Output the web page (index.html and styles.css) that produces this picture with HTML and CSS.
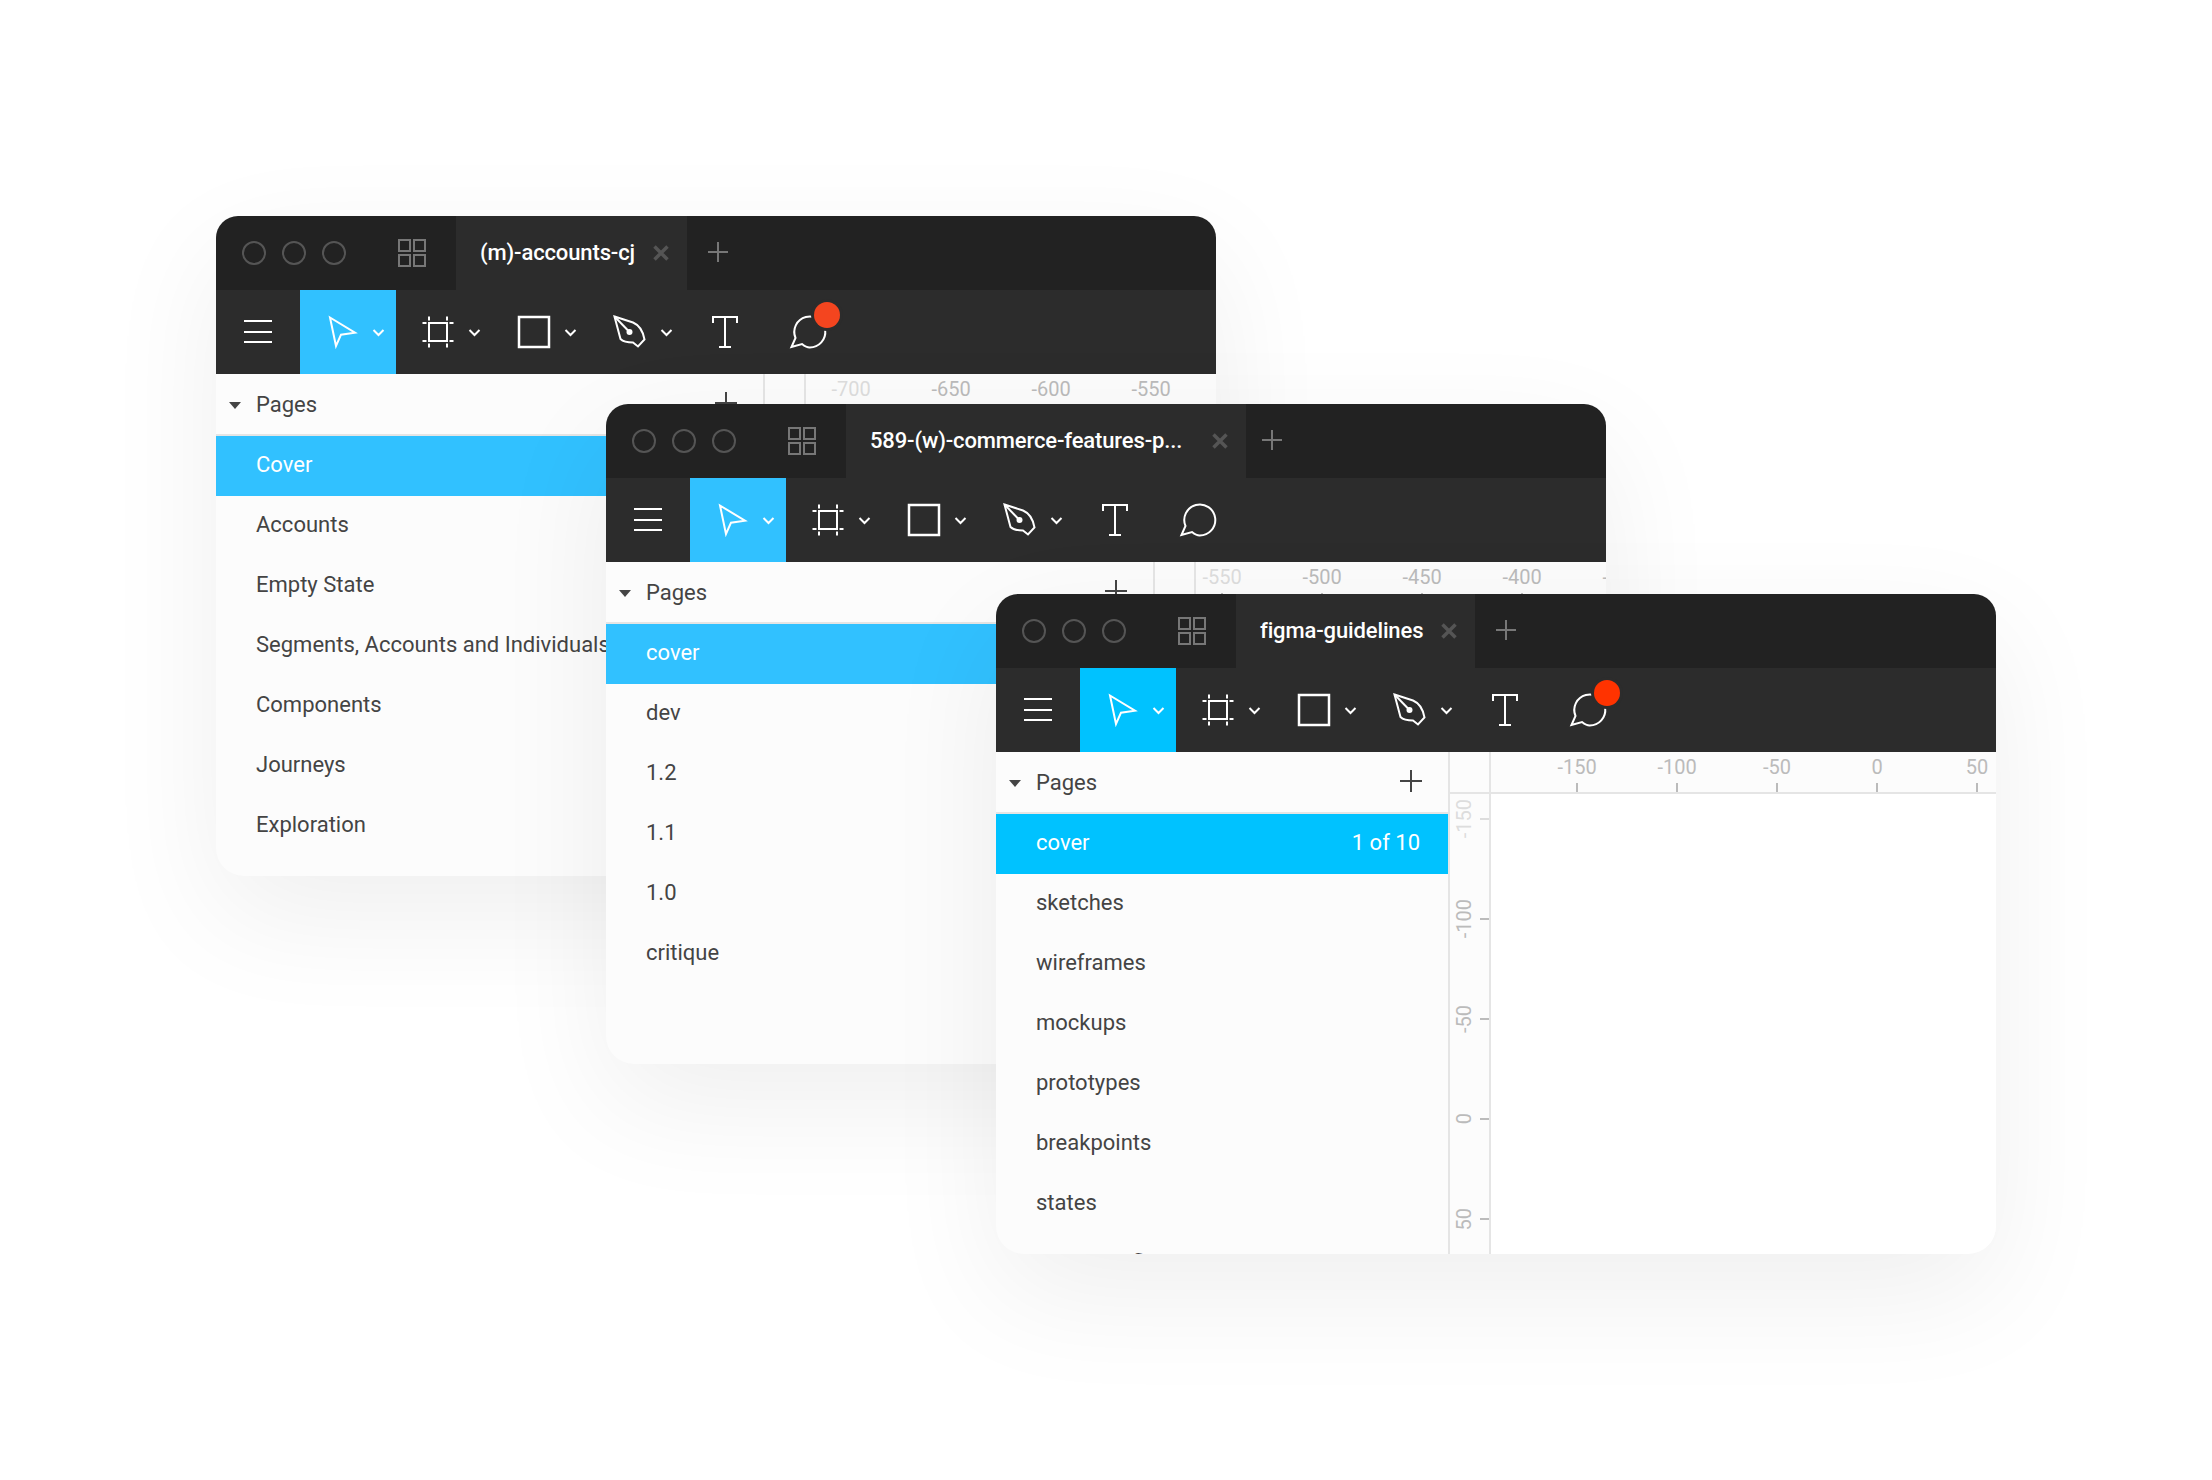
FILE: index.html

```html
<!DOCTYPE html>
<html lang="en">
<head>
  <meta charset="UTF-8" />
  <title>Figma windows</title>
  <link rel="stylesheet" href="styles.css">
</head>
<body>
  <!-- toolbar icons, each drawn in its own 96x84 tool box -->
  <svg class="defs" aria-hidden="true">
    <symbol id="move" viewBox="0 0 96 84"><path class="ln" d="M30 27.5L55 42.7 41 44.7 36 56Z"/><path class="ln" d="M73.5 40l5 5 5-5"/></symbol>
    <symbol id="frame" viewBox="0 0 96 84">
      <rect class="ln" x="33" y="33" width="18" height="18"/>
      <path class="ln" d="M26.5 33h4M53.5 33h4M26.5 51h4M53.5 51h4M33 26.5v4M51 26.5v4M33 53.5v4M51 53.5v4"/>
      <path class="ln" d="M73.5 40l5 5 5-5"/>
    </symbol>
    <symbol id="rect" viewBox="0 0 96 84"><rect class="ln ln-thick" x="27" y="27" width="30" height="30"/><path class="ln" d="M73.5 40l5 5 5-5"/></symbol>
    <symbol id="pen" viewBox="0 0 96 84">
      <path class="ln" d="M26.5 26.5L45 32.5C51 35 55 41 56.5 49.5L50 56.5 45 52.5C40 52.5 35 51.5 32.5 49Z"/>
      <path class="ln" d="M26.5 26.5L41.5 42"/>
      <circle class="dot" cx="41.5" cy="42" r="3"/>
      <path class="ln" d="M73.5 40l5 5 5-5"/>
    </symbol>
    <symbol id="text" viewBox="0 0 96 84"><path class="ln" d="M29 33v-6h24v6M41 27v30M35 57h12"/></symbol>
    <symbol id="comment" viewBox="0 0 96 84"><path class="ln" d="M11.5 57L15.5 48A15.5 15.5 0 1 1 29.5 57.5C27 57.5 24.5 56 22 54Z"/></symbol>
    <symbol id="grid" viewBox="0 0 28 28"><path class="ln-grey" d="M1 1h11v11H1zM16 1h11v11H16zM1 16h11v11H1zM16 16h11v11H16z"/></symbol>
    <symbol id="close" viewBox="0 0 16 16"><path class="ln-close" d="M1.5 1.5l13 13M14.5 1.5l-13 13"/></symbol>
  </svg>

  <section class="win win-back win-1">
    <div class="titlebar">
      <div class="lights"><i></i><i></i><i></i></div>
      <svg class="grid"><use href="#grid"/></svg>
      <div class="tab"><span class="tab-name">(m)-accounts-cj</span><svg class="tab-x"><use href="#close"/></svg></div>
      <div class="tab-plus"></div>
    </div>
    <div class="toolbar">
      <div class="menu"><i></i><i></i><i></i></div>
      <svg class="tool tool-on"><use href="#move"/></svg>
      <svg class="tool"><use href="#frame"/></svg>
      <svg class="tool"><use href="#rect"/></svg>
      <svg class="tool"><use href="#pen"/></svg>
      <svg class="tool"><use href="#text"/></svg>
      <div class="tool-wrap"><svg class="tool"><use href="#comment"/></svg><span class="badge"></span></div>
    </div>
    <div class="body">
      <aside class="sidebar sidebar-wide">
        <div class="pages-head"><span class="caret"></span><span>Pages</span><span class="add"></span></div>
        <ul class="pages">
          <li class="on">Cover</li>
          <li>Accounts</li>
          <li>Empty State</li>
          <li>Segments, Accounts and Individuals</li>
          <li>Components</li>
          <li>Journeys</li>
          <li>Exploration</li>
        </ul>
      </aside>
      <div class="canvas">
        <div class="ruler-x">
          <div class="corner"></div>
          <div class="marks">
            <span class="mark mark-faint">-700</span><span class="mark">-650</span><span class="mark">-600</span><span class="mark">-550</span>
          </div>
        </div>
      </div>
    </div>
  </section>

  <section class="win win-back win-2">
    <div class="titlebar">
      <div class="lights"><i></i><i></i><i></i></div>
      <svg class="grid"><use href="#grid"/></svg>
      <div class="tab tab-long"><span class="tab-name">589-(w)-commerce-features-p...</span><svg class="tab-x"><use href="#close"/></svg></div>
      <div class="tab-plus"></div>
    </div>
    <div class="toolbar">
      <div class="menu"><i></i><i></i><i></i></div>
      <svg class="tool tool-on"><use href="#move"/></svg>
      <svg class="tool"><use href="#frame"/></svg>
      <svg class="tool"><use href="#rect"/></svg>
      <svg class="tool"><use href="#pen"/></svg>
      <svg class="tool"><use href="#text"/></svg>
      <svg class="tool"><use href="#comment"/></svg>
    </div>
    <div class="body">
      <aside class="sidebar sidebar-wide">
        <div class="pages-head"><span class="caret"></span><span>Pages</span><span class="add"></span></div>
        <ul class="pages">
          <li class="on">cover</li>
          <li>dev</li>
          <li>1.2</li>
          <li>1.1</li>
          <li>1.0</li>
          <li>critique</li>
        </ul>
      </aside>
      <div class="canvas">
        <div class="ruler-x">
          <div class="corner"></div>
          <div class="marks">
            <span class="mark mark-faint">-550</span><span class="mark">-500</span><span class="mark">-450</span><span class="mark">-400</span><span class="mark">-350</span>
          </div>
        </div>
      </div>
    </div>
  </section>

  <section class="win win-3">
    <div class="titlebar">
      <div class="lights"><i></i><i></i><i></i></div>
      <svg class="grid"><use href="#grid"/></svg>
      <div class="tab"><span class="tab-name">figma-guidelines</span><svg class="tab-x"><use href="#close"/></svg></div>
      <div class="tab-plus"></div>
    </div>
    <div class="toolbar">
      <div class="menu"><i></i><i></i><i></i></div>
      <svg class="tool tool-on"><use href="#move"/></svg>
      <svg class="tool"><use href="#frame"/></svg>
      <svg class="tool"><use href="#rect"/></svg>
      <svg class="tool"><use href="#pen"/></svg>
      <svg class="tool"><use href="#text"/></svg>
      <div class="tool-wrap"><svg class="tool"><use href="#comment"/></svg><span class="badge"></span></div>
    </div>
    <div class="body">
      <aside class="sidebar">
        <div class="pages-head"><span class="caret"></span><span>Pages</span><span class="add"></span></div>
        <ul class="pages">
          <li class="on"><span>cover</span><span>1 of 10</span></li>
          <li>sketches</li>
          <li>wireframes</li>
          <li>mockups</li>
          <li>prototypes</li>
          <li>breakpoints</li>
          <li>states</li>
          <li>mvp user flows</li>
        </ul>
      </aside>
      <div class="canvas">
        <div class="ruler-x">
          <div class="corner"></div>
          <div class="marks">
            <span class="mark">-150</span><span class="mark">-100</span><span class="mark">-50</span><span class="mark">0</span><span class="mark">50</span>
          </div>
        </div>
        <div class="stage">
          <div class="ruler-y">
            <div class="vmark vmark-faint"><span>-150</span><i></i></div>
            <div class="vmark"><span>-100</span><i></i></div>
            <div class="vmark"><span>-50</span><i></i></div>
            <div class="vmark"><span>0</span><i></i></div>
            <div class="vmark"><span>50</span><i></i></div>
          </div>
        </div>
      </div>
    </div>
  </section>
</body>
</html>
```

FILE: styles.css

```css
body {
  margin: 0;
  width: 2212px;
  height: 1480px;
  position: relative;
  overflow: hidden;
  background: #fff;
  font-family: Roboto, sans-serif;
  color: #444;
}
.defs {
  position: absolute;
  width: 0;
  height: 0;
}
.ln {
  fill: none;
  stroke: #fff;
  stroke-width: 2;
}
.ln-thick {
  stroke-width: 2.5;
}
.ln-grey {
  fill: none;
  stroke: #777;
  stroke-width: 2;
}
.ln-close {
  fill: none;
  stroke: #555;
  stroke-width: 3.5;
}
.dot {
  fill: #fff;
}

/* windows sit on a free canvas */
.win {
  position: absolute;
  width: 1000px;
  height: 660px;
  border-radius: 22px 22px 28px 28px;
  overflow: hidden;
  display: flex;
  flex-direction: column;
  background: #fcfcfc;
  box-shadow: 0 40px 120px rgba(0,0,0,0.065);
  --accent: #00c2ff;
}
.win-back {
  --accent: #31c1ff;
}
.win-1 {
  left: 216px;
  top: 216px;
}
.win-2 {
  left: 606px;
  top: 404px;
}
.win-3 {
  left: 996px;
  top: 594px;
}

/* title bar */
.titlebar {
  height: 74px;
  flex: none;
  display: flex;
  align-items: center;
  background: #222;
}
.lights {
  display: flex;
  gap: 16px;
  margin-left: 26px;
}
.lights i {
  width: 20px;
  height: 20px;
  border: 2px solid #555;
  border-radius: 50%;
}
.grid {
  width: 28px;
  height: 28px;
  margin-left: 52px;
  margin-right: 30px;
}
.tab {
  height: 100%;
  display: flex;
  align-items: center;
  gap: 18px;
  padding: 0 18px 0 24px;
  background: #2c2c2c;
  color: #fff;
  font-size: 22px;
  font-weight: 500;
  letter-spacing: -0.13px;
}
.tab-name {
  padding-bottom: 2px;
}
.tab-long {
  width: 400px;
  box-sizing: border-box;
  justify-content: space-between;
}
.tab-x {
  width: 16px;
  height: 16px;
  flex: none;
}
.tab-plus {
  width: 20px;
  height: 20px;
  margin-left: 21px;
  margin-top: -2px;
  background: linear-gradient(#777, #777) center / 100% 2px no-repeat,
              linear-gradient(#777, #777) center / 2px 100% no-repeat;
}
.tab-long + .tab-plus {
  margin-left: 16px;
}

/* tool bar */
.toolbar {
  height: 84px;
  flex: none;
  display: flex;
  background: #2c2c2c;
}
.menu {
  width: 84px;
  display: flex;
  flex-direction: column;
  gap: 8.5px;
  padding-top: 30px;
  padding-left: 28px;
  box-sizing: border-box;
}
.menu i {
  width: 28px;
  height: 2px;
  background: #fff;
}
.tool {
  width: 96px;
  height: 84px;
  display: block;
  flex: none;
}
.tool-on {
  background: var(--accent);
}
.tool-wrap {
  position: relative;
}
.badge {
  position: absolute;
  left: 34px;
  top: 12px;
  width: 26px;
  height: 26px;
  border-radius: 50%;
  background: #ff3300;
  box-shadow: 0 0 0 3px #2c2c2c;
}
.win-back .badge {
  background: #f4451f;
}

/* pages panel */
.body {
  flex: 1;
  display: flex;
  min-height: 0;
}
.sidebar {
  width: 452px;
  flex: none;
  border-right: 2px solid #e5e5e5;
  font-size: 22px;
  overflow: hidden;
}
.sidebar-wide {
  width: 547px;
}
.pages-head {
  height: 60px;
  display: flex;
  align-items: center;
  padding: 0 26px 0 40px;
  border-bottom: 2px solid #e5e5e5;
  position: relative;
}
.caret {
  position: absolute;
  left: 13px;
  top: 28px;
  border-top: 7px solid #444;
  border-left: 6px solid transparent;
  border-right: 6px solid transparent;
}
.add {
  margin-left: auto;
  width: 22px;
  height: 22px;
  margin-top: -2px;
  background: linear-gradient(#444, #444) center / 100% 2px no-repeat,
              linear-gradient(#444, #444) center / 2px 100% no-repeat;
}
.pages {
  list-style: none;
  margin: 0;
  padding: 0;
}
.pages li {
  height: 60px;
  box-sizing: border-box;
  display: flex;
  align-items: center;
  justify-content: space-between;
  padding: 0 28px 3px 40px;
  white-space: nowrap;
}
.pages .on {
  background: var(--accent);
  color: #fff;
}

/* rulers */
.canvas {
  flex: 1;
  min-width: 0;
  display: flex;
  flex-direction: column;
}
.ruler-x {
  height: 40px;
  flex: none;
  display: flex;
  border-bottom: 2px solid #e5e5e5;
  background: #fcfcfc;
}
.corner {
  width: 39px;
  flex: none;
  border-right: 2px solid #e5e5e5;
}
.marks {
  flex: 1;
  min-width: 0;
  display: flex;
  padding-left: 36px;
  overflow: hidden;
}
.win-1 .marks {
  padding-left: 0;
}
.win-1 .mark:first-child {
  margin-left: -5px;
}
.win-2 .marks {
  padding-left: 0;
}
.win-2 .mark:first-child {
  margin-left: -24px;
}
.mark {
  width: 100px;
  flex: none;
  position: relative;
  text-align: center;
  font-size: 20px;
  line-height: 30px;
  color: #bbb;
}
.mark::after {
  content: "";
  position: absolute;
  left: 49px;
  bottom: 0;
  width: 2px;
  height: 9px;
  background: #bbb;
}
.mark-faint {
  color: #ddd;
}
.stage {
  flex: 1;
  min-height: 0;
  display: flex;
  background: #fff;
}
.ruler-y {
  width: 39px;
  flex: none;
  border-right: 2px solid #e5e5e5;
  background: #fcfcfc;
  overflow: hidden;
}
.vmark {
  height: 100px;
  display: flex;
  align-items: center;
  justify-content: flex-end;
  gap: 4px;
  color: #bbb;
  font-size: 20px;
  position: relative;
  top: -25px;
}
.vmark span {
  writing-mode: vertical-rl;
  transform: rotate(180deg);
}
.vmark i {
  width: 9px;
  height: 2px;
  background: #bbb;
}
.vmark-faint {
  color: #ddd;
}
.vmark-faint i {
  background: #ddd;
}
```
